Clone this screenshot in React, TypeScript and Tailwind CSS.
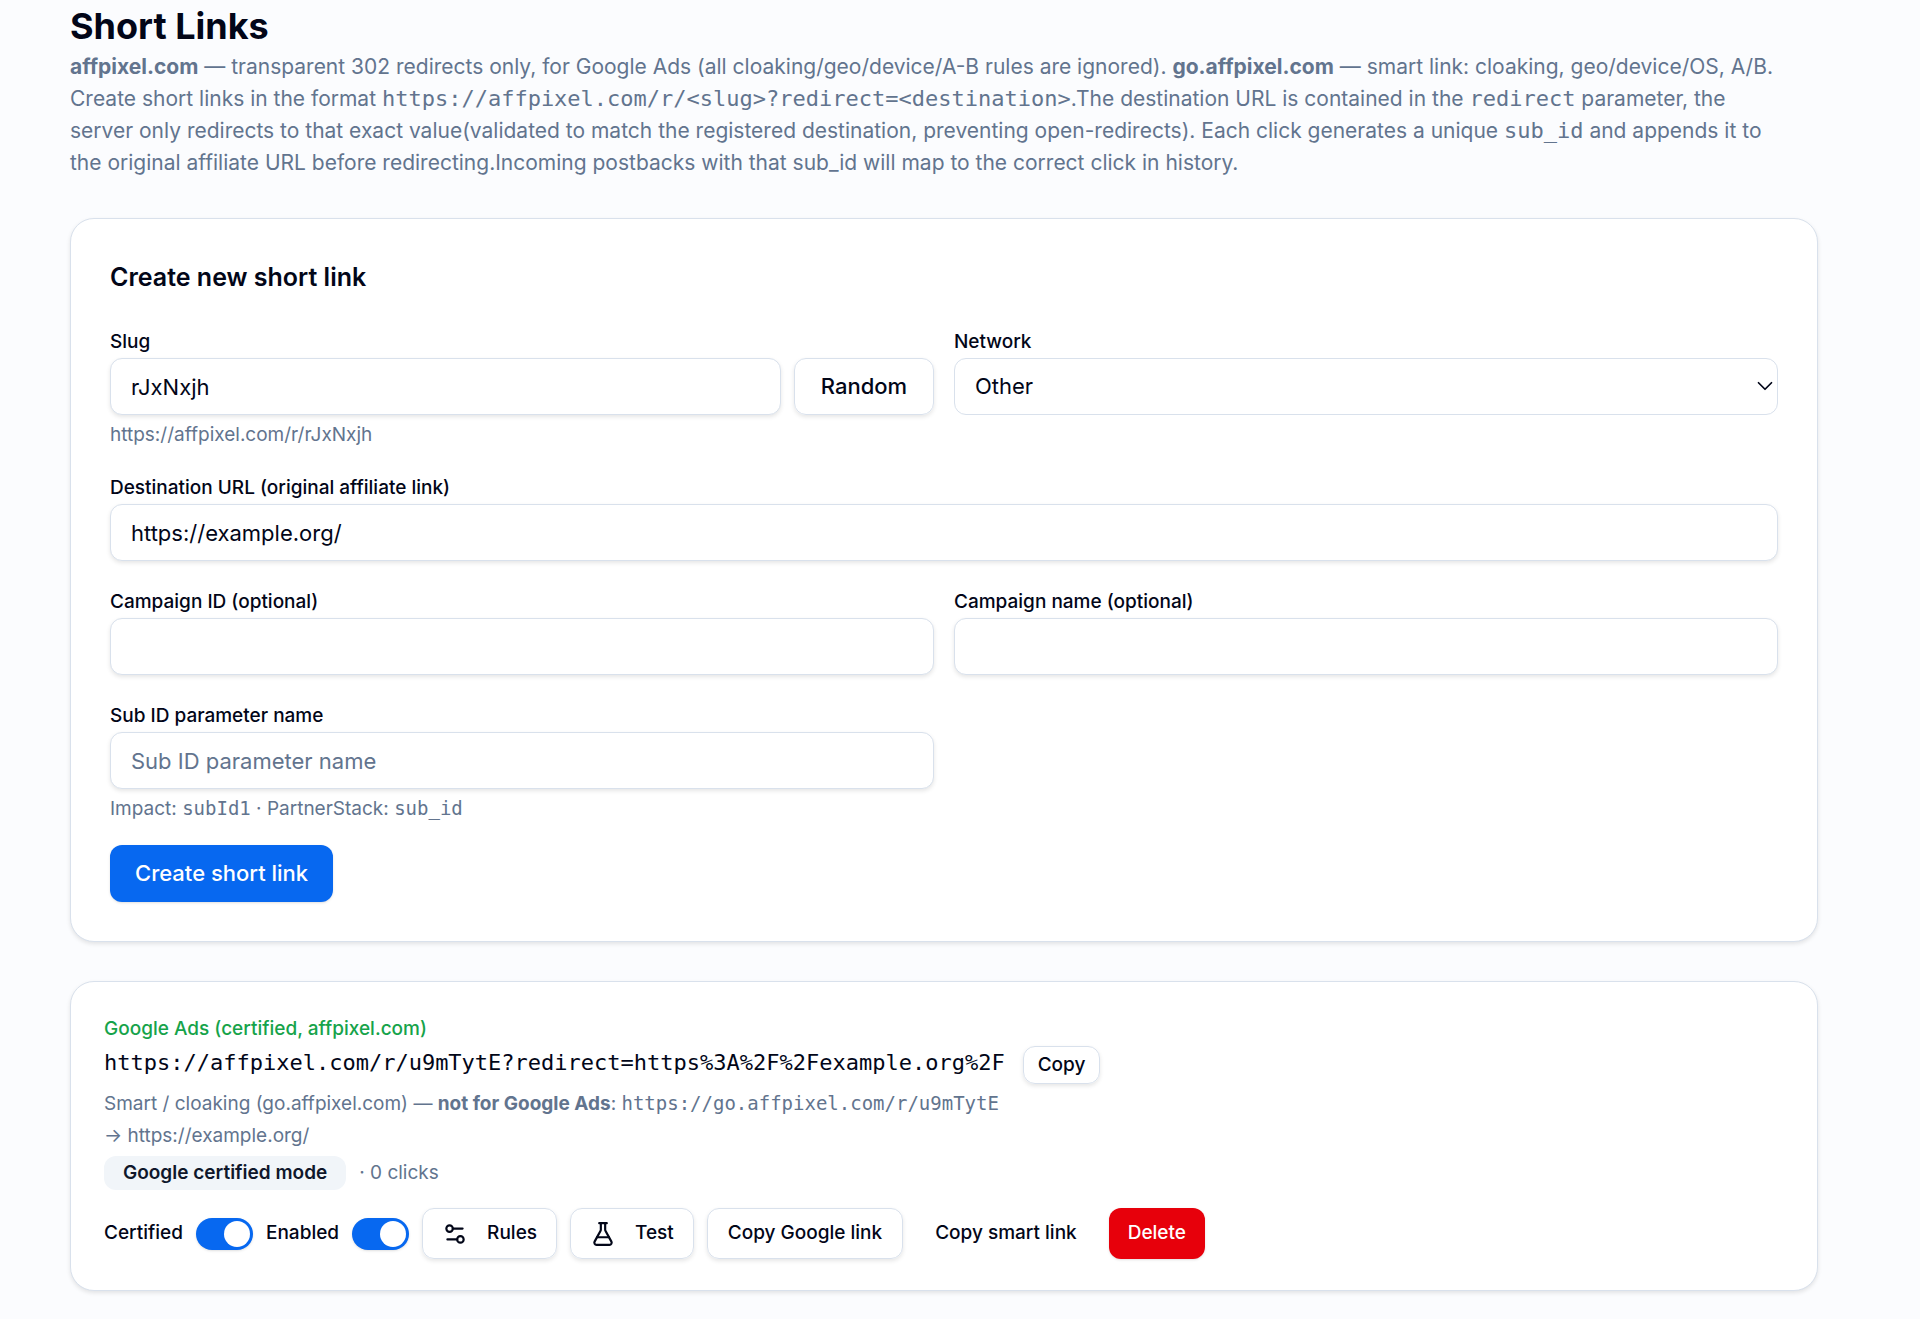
import { useState } from 'react';
import type { ButtonHTMLAttributes, InputHTMLAttributes, ReactNode } from 'react';
import { ChevronDown, FlaskConical, Settings2 } from 'lucide-react';
import clsx from 'clsx';

const LINK = 'https://affpixel.com/r/u9mTytE?redirect=https%3A%2F%2Fexample.org%2F';
const SMART_LINK = 'https://go.affpixel.com/r/u9mTytE';

const SHADOW = 'shadow-[0_2px_4px_rgba(0,0,0,0.1)]';
const OUTLINE = clsx('border border-[#d9e1ec]', SHADOW);
const CARD = clsx('rounded-3xl bg-white', OUTLINE);
const MONO = "font-['DejaVu_Sans_Mono',monospace]";

function Code({ children, className }: { children: ReactNode; className?: string }) {
  return <code className={clsx(MONO, 'leading-none', className)}>{children}</code>;
}

function Field({ id, label, hint, children }: { id: string; label: string; hint?: ReactNode; children: ReactNode }) {
  return (
    <div>
      <label htmlFor={id} className="block text-[19px] leading-[33px] font-medium">
        {label}
      </label>
      {children}
      {hint && <p className="mt-[7px] text-[19px] leading-[25px] text-slate-500">{hint}</p>}
    </div>
  );
}

function TextInput({ className, ...props }: InputHTMLAttributes<HTMLInputElement>) {
  return (
    <input
      className={clsx(
        'block h-[57px] w-full min-w-0 rounded-xl bg-white px-5 text-[22px] placeholder:text-slate-500',
        OUTLINE,
        className,
      )}
      {...props}
    />
  );
}

function SmallButton({ className, ...props }: ButtonHTMLAttributes<HTMLButtonElement>) {
  return (
    <button
      type="button"
      className={clsx('flex h-[51px] items-center rounded-xl text-[19px] font-medium whitespace-nowrap', className)}
      {...props}
    />
  );
}

function Toggle({ label, checked, onChange }: { label: string; checked: boolean; onChange: (v: boolean) => void }) {
  return (
    <label className="flex items-center gap-[13px] text-[19px] font-medium">
      {label}
      <input
        type="checkbox"
        role="switch"
        checked={checked}
        onChange={(e) => onChange(e.target.checked)}
        className="h-8 w-[57px] appearance-none rounded-full bg-slate-300 shadow-sm before:m-[3px] before:block before:size-[26px] before:rounded-full before:bg-white checked:bg-[#0768f0] checked:before:ml-7"
      />
    </label>
  );
}

export default function App() {
  const [slug, setSlug] = useState('rJxNxjh');
  const [destination, setDestination] = useState('https://example.org/');
  const [certified, setCertified] = useState(true);
  const [enabled, setEnabled] = useState(true);

  function randomSlug() {
    setSlug(Math.random().toString(36).slice(2, 9));
  }

  return (
    <main className="min-h-screen bg-[#fbfcfe] pt-1 pr-[102px] pb-7 pl-[70px] font-[Inter,sans-serif] text-[#020618]">
      <h1 className="text-[36px] leading-[44px] font-bold">Short Links</h1>
      <p className="mt-[3px] text-[21px] leading-8 text-slate-500">
        <strong>affpixel.com</strong> — transparent 302 redirects only, for Google Ads (all cloaking/geo/device/A-B
        rules are ignored). <strong>go.affpixel.com</strong> — smart link: cloaking, geo/device/OS, A/B.
        <br />
        Create short links in the format{' '}
        <Code className="text-[22px]">{'https://affpixel.com/r/<slug>?redirect=<destination>'}</Code>.The destination
        URL is contained in the <Code className="text-[22px]">redirect</Code> parameter, the
        <br />
        server only redirects to that exact value(validated to match the registered destination, preventing
        open-redirects). Each click generates a unique <Code className="text-[22px]">sub_id</Code> and appends it to
        <br />
        the original affiliate URL before redirecting.Incoming postbacks with that sub_id will map to the correct click
        in history.
      </p>

      <section className={clsx(CARD, 'mt-[39px] p-[39px]')}>
        <h2 className="text-[25px] leading-[38px] font-semibold">Create new short link</h2>
        <form className="mt-[29px] grid grid-cols-2 gap-x-5 gap-y-6" onSubmit={(e) => e.preventDefault()}>
          <Field id="slug" label="Slug" hint={`https://affpixel.com/r/${slug}`}>
            <div className="flex gap-[13px]">
              <TextInput id="slug" value={slug} onChange={(e) => setSlug(e.target.value)} />
              <button
                type="button"
                onClick={randomSlug}
                className={clsx('h-[57px] w-[140px] shrink-0 rounded-xl text-[22px] font-medium', OUTLINE)}
              >
                Random
              </button>
            </div>
          </Field>
          <Field id="network" label="Network">
            <div className="relative">
              <select
                id="network"
                className="block h-[57px] w-full appearance-none rounded-xl border border-[#d9e1ec] bg-white px-5 text-[22px]"
              >
                <option>Other</option>
                <option>Impact</option>
                <option>PartnerStack</option>
              </select>
              <ChevronDown strokeWidth={1.6} className="pointer-events-none absolute top-[15px] right-0 size-[26px]" />
            </div>
          </Field>
          <div className="col-span-2">
            <Field id="destination" label="Destination URL (original affiliate link)">
              <TextInput id="destination" value={destination} onChange={(e) => setDestination(e.target.value)} />
            </Field>
          </div>
          <Field id="campaign-id" label="Campaign ID (optional)">
            <TextInput id="campaign-id" />
          </Field>
          <Field id="campaign-name" label="Campaign name (optional)">
            <TextInput id="campaign-name" />
          </Field>
          <Field
            id="sub-id"
            label="Sub ID parameter name"
            hint={
              <>
                Impact: <Code>subId1</Code> · PartnerStack: <Code>sub_id</Code>
              </>
            }
          >
            <TextInput id="sub-id" placeholder="Sub ID parameter name" />
          </Field>
          <div className="col-span-2">
            <button
              type="submit"
              className="block h-[57px] rounded-xl bg-[#0768f0] px-[25px] text-[22px] font-medium text-white shadow-sm"
            >
              Create short link
            </button>
          </div>
        </form>
      </section>

      <section className={clsx(CARD, 'mt-[39px] px-[33px] py-[31px] text-[19px]')}>
        <p className="leading-8 font-medium text-[#16a34a]">Google Ads (certified, affpixel.com)</p>
        <div className="flex items-start gap-[18px]">
          <span className={clsx(MONO, 'text-[22px] leading-9')}>{LINK}</span>
          <button type="button" className={clsx('mt-px h-[38px] rounded-xl px-[14px] text-[19px] font-medium', OUTLINE)}>
            Copy
          </button>
        </div>
        <p className="mt-1 leading-8 text-slate-500">
          Smart / cloaking (go.affpixel.com) — <strong>not for Google Ads</strong>: <Code>{SMART_LINK}</Code>
        </p>
        <p className="leading-8 text-slate-500">→ https://example.org/</p>
        <div className="mt-1 flex items-center gap-[13px] text-slate-500">
          <span className="rounded-xl bg-slate-100 px-[19px] leading-[34px] font-semibold text-slate-900">
            Google certified mode
          </span>
          · 0 clicks
        </div>

        <div className="mt-[18px] flex flex-wrap items-center gap-[13px]">
          <Toggle label="Certified" checked={certified} onChange={setCertified} />
          <Toggle label="Enabled" checked={enabled} onChange={setEnabled} />
          <SmallButton className={clsx('gap-[19px] px-[19px]', OUTLINE)}>
            <Settings2 className="size-[26px]" />
            Rules
          </SmallButton>
          <SmallButton className={clsx('gap-[19px] px-[19px]', OUTLINE)}>
            <FlaskConical className="size-[26px]" />
            Test
          </SmallButton>
          <SmallButton className={clsx('px-5', OUTLINE)}>Copy Google link</SmallButton>
          <SmallButton className="px-[19px]">Copy smart link</SmallButton>
          <SmallButton className="bg-[#e7000b] px-[19px] text-white shadow-sm">Delete</SmallButton>
        </div>
      </section>
    </main>
  );
}
